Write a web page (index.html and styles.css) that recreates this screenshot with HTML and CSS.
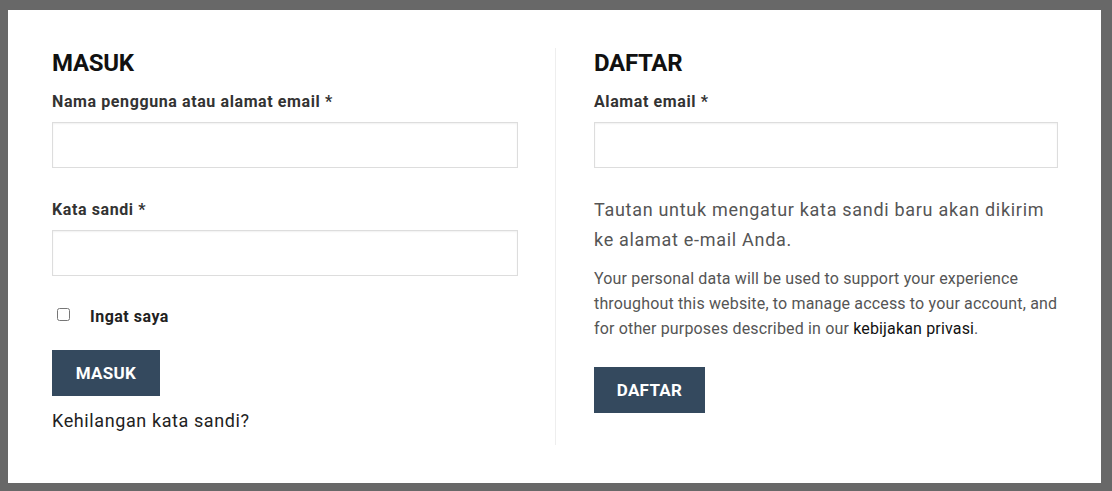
FILE: index.html
```html
<!DOCTYPE html>
<html lang="id">
<head>
<meta charset="utf-8">
<title>Akun</title>
<link rel="stylesheet" href="styles.css">
</head>
<body>
<div class="panel">
  <section class="col col-login">
    <h2 class="title">MASUK</h2>
    <form class="form">
      <label class="label" for="u">Nama pengguna atau alamat email&nbsp;*</label>
      <input class="input" id="u" type="text">
      <label class="label label-gap" for="p">Kata sandi&nbsp;*</label>
      <input class="input" id="p" type="password">
      <label class="remember"><input class="check" type="checkbox"><span>Ingat saya</span></label>
      <button class="btn btn-login" type="button">MASUK</button>
      <a class="lost" href="#">Kehilangan kata sandi?</a>
    </form>
  </section>
  <section class="col col-reg">
    <h2 class="title">DAFTAR</h2>
    <form class="form">
      <label class="label" for="e">Alamat email&nbsp;*</label>
      <input class="input" id="e" type="email">
      <p class="note">Tautan untuk mengatur kata sandi baru akan dikirim ke alamat e-mail Anda.</p>
      <p class="privacy">Your personal data will be used to support your experience throughout this website, to manage access to your account, and for other purposes described in our <a href="#" class="plink">kebijakan privasi</a>.</p>
      <button class="btn btn-reg" type="button">DAFTAR</button>
    </form>
  </section>
</div>
</body>
</html>
```
FILE: styles.css
```css
* { box-sizing: border-box; }
html, body { margin: 0; padding: 0; }
body {
  background: #686868;
  font-family: Roboto, "Noto Sans", sans-serif;
  padding: 10px 11px 8px 8px;
  height: 491px;
}
.panel {
  background: #fff;
  height: 473px;
  padding: 38px 43px 38px 44px;
  display: grid;
  grid-template-columns: 504px 1fr;
}
.col { display: flex; flex-direction: column; }
.col-login { padding-right: 37px; border-right: 1px solid #eeeeee; }
.col-reg { padding-left: 38px; }
.title {
  margin: 0;
  padding-top: 1px;
  font-size: 24px;
  line-height: 28px;
  font-weight: 700;
  color: #111;
  letter-spacing: -0.3px;
}
.form { display: flex; flex-direction: column; align-items: flex-start; }
.label {
  margin-top: 14px;
  font-size: 16px;
  line-height: 22px;
  font-weight: 700;
  color: #333;
  letter-spacing: 0.6px;
}
.label-gap { margin-top: 31px; }
.input {
  margin-top: 9px;
  width: 100%;
  height: 46px;
  border: 1px solid #dddddd;
  box-shadow: inset 0 1px 2px rgba(0,0,0,0.06);
  background: #fff;
  font: inherit;
  padding: 0 10px;
}
.remember {
  margin-top: 30px;
  display: flex;
  align-items: center;
  font-size: 16px;
  font-weight: 700;
  color: #222;
  line-height: 22px;
  letter-spacing: 0.5px;
}
.check { margin: -6px 20px 0 5px; width: 13px; height: 13px; }
.btn {
  border: 0;
  background: #34495e;
  color: #fff;
  font-family: inherit;
  font-size: 17px;
  font-weight: 700;
  height: 46px;
  padding: 0;
  letter-spacing: 0.3px;
  cursor: pointer;
}
.btn-login { margin-top: 22px; width: 108px; }
.btn-reg { margin-top: 26px; width: 111px; }
.lost {
  margin-top: 13px;
  font-size: 18px;
  line-height: 24px;
  color: #222;
  text-decoration: none;
  letter-spacing: 0.6px;
}
.note {
  margin: 27px 0 0;
  font-size: 18px;
  line-height: 30px;
  color: #555;
  letter-spacing: 0.7px;
}
.privacy {
  margin: 11px 0 0;
  font-size: 16px;
  line-height: 25px;
  color: #555;
  letter-spacing: 0.16px;
}
.plink { color: #111; text-decoration: none; }
```
